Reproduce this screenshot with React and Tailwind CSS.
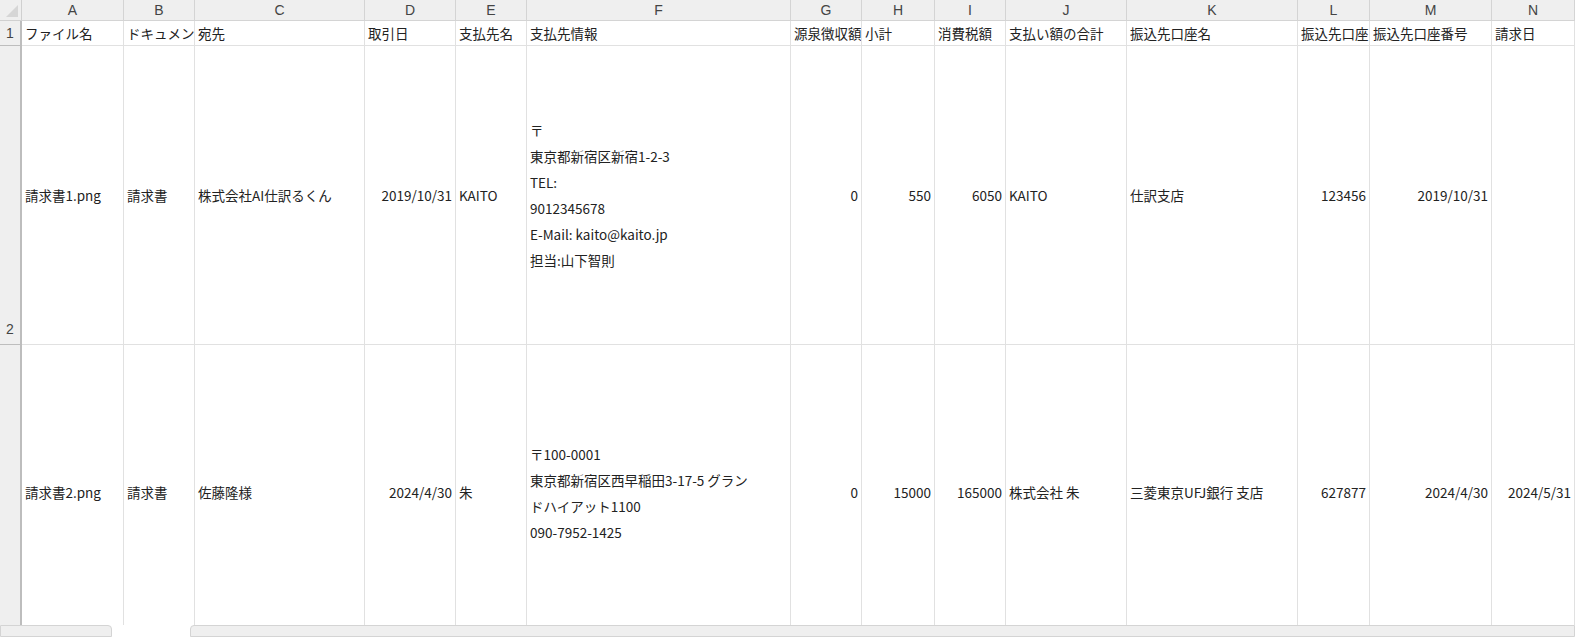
import React from 'react';

const cols = ['A', 'B', 'C', 'D', 'E', 'F', 'G', 'H', 'I', 'J', 'K', 'L', 'M', 'N'];
const widths = [102, 71, 170, 91, 71, 264, 71, 73, 71, 121, 171, 72, 122, 83];
const right = [false, false, false, true, false, false, true, true, true, false, false, true, true, true];

const header = ['ファイル名', 'ドキュメント', '宛先', '取引日', '支払先名', '支払先情報', '源泉徴収額', '小計', '消費税額', '支払い額の合計', '振込先口座名', '振込先口座', '振込先口座番号', '請求日'];

const rows = [
  {
    h: 299,
    cells: ['請求書1.png', '請求書', '株式会社AI仕訳るくん', '2019/10/31', 'KAITO',
      ['〒', '東京都新宿区新宿1-2-3', 'TEL:', '9012345678', 'E-Mail: kaito@kaito.jp', '担当:山下智則'],
      '0', '550', '6050', 'KAITO', '仕訳支店', '123456', '2019/10/31', ''],
  },
  {
    h: 296,
    cells: ['請求書2.png', '請求書', '佐藤隆様', '2024/4/30', '朱',
      ['〒100-0001', '東京都新宿区西早稲田3-17-5 グラン', 'ドハイアット1100', '090-7952-1425'],
      '0', '15000', '165000', '株式会社 朱', '三菱東京UFJ銀行 支店', '627877', '2024/4/30', '2024/5/31'],
  },
];

const tpl = { gridTemplateColumns: `22px ${widths.map((w) => w + 'px').join(' ')} 1fr` };

export default function App() {
  return (
    <div className="w-[1575px] h-[637px] overflow-hidden bg-white text-[13.5px] text-[#222] relative" style={{ fontFamily: '"Noto Sans CJK JP", "Noto Sans", sans-serif' }}>
      <div className="grid" style={tpl}>
        {/* column letters */}
        <div className="h-[21px] bg-[#efefef] border-r border-b border-[#d0d0d0] relative">
          <div className="absolute right-[3px] bottom-[3px] w-0 h-0 border-l-[12px] border-l-transparent border-b-[12px] border-b-[#d6d6d6]" />
        </div>
        {cols.map((c) => (
          <div key={c} className="h-[21px] bg-[#efefef] border-r border-b border-[#d4d4d4] text-[#444] flex items-center justify-center text-[14px]" style={{ fontFamily: '"Liberation Sans", sans-serif' }}>{c}</div>
        ))}
        <div className="h-[21px] bg-[#efefef] border-b border-[#d4d4d4]" />

        {/* row 1 */}
        <div className="h-[25px] bg-[#efefef] border-r-2 border-b border-[#bdbdbd] flex items-center justify-center text-[#444] text-[14px]" style={{ fontFamily: '"Liberation Sans", sans-serif' }}>1</div>
        {header.map((t, i) => (
          <div key={i} className="h-[25px] border-r border-b border-[#e1e1e1] flex items-center px-[3px] whitespace-nowrap overflow-hidden">{t}</div>
        ))}
        <div className="h-[25px] bg-[#efefef]" />

        {rows.map((r, ri) => (
          <React.Fragment key={ri}>
            <div className="bg-[#efefef] border-r-2 border-b border-[#bdbdbd] flex items-end justify-start pl-[6px] pb-[4px] text-[#444] text-[14px]" style={{ height: r.h, fontFamily: '"Liberation Sans", sans-serif' }}>{ri === 0 ? 2 : ''}</div>
            {r.cells.map((t, i) => (
              <div key={i} className={`border-r border-b border-[#e1e1e1] flex items-center px-[3px] whitespace-nowrap overflow-hidden ${right[i] ? 'justify-end' : ''}`} style={{ height: r.h }}>
                {Array.isArray(t) ? (
                  <div className="leading-[26px]">{t.map((l, j) => <div key={j}>{l}</div>)}</div>
                ) : t}
              </div>
            ))}
            <div className="bg-[#efefef]" style={{ height: r.h }} />
          </React.Fragment>
        ))}
      </div>

      {/* sheet tab bar */}
      <div className="absolute left-0 right-0 bottom-0 h-[12px] flex bg-white">
        <div className="w-[112px] h-full bg-[#efefef] border border-[#d4d4d4] rounded-tr-[4px]" />
        <div className="w-[78px] h-full bg-white" />
        <div className="flex-1 h-full bg-[#efefef] border border-[#d4d4d4] rounded-tl-[4px]" />
      </div>
    </div>
  );
}
